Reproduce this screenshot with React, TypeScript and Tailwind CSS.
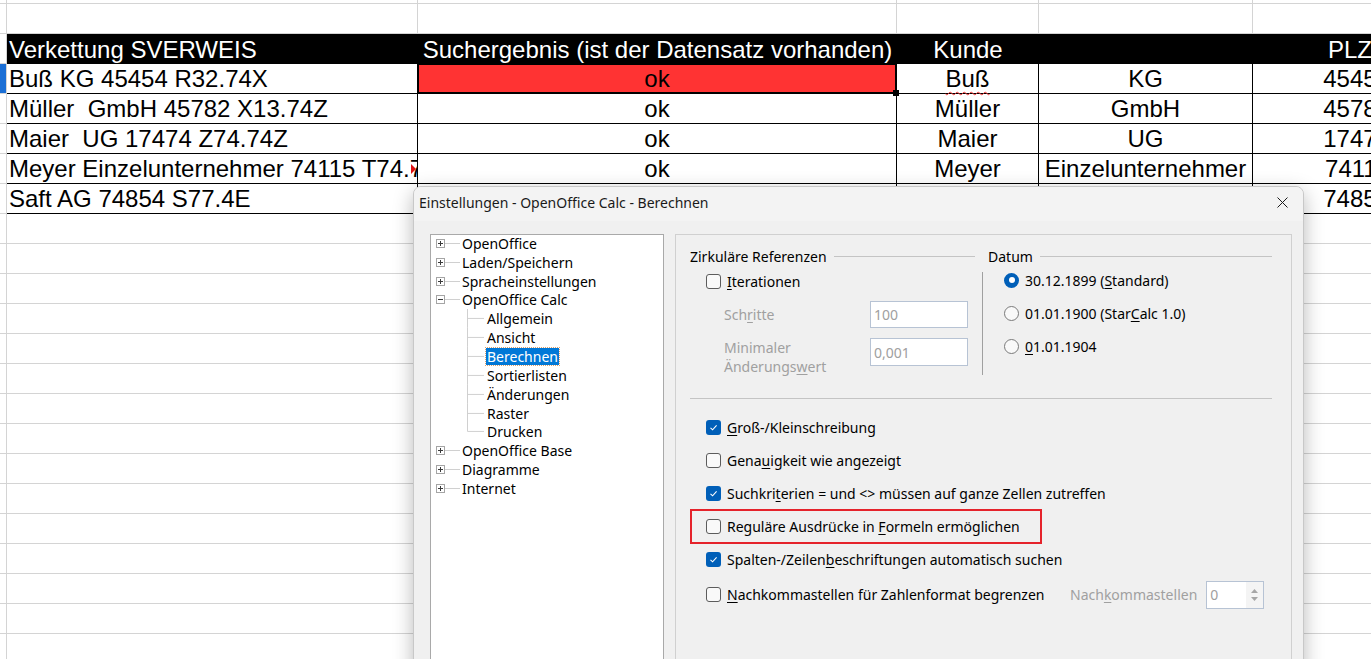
import React from 'react';

// Spreadsheet column widths (row header stub, A..E)
const colW = ['w-[7px]', 'w-[411px]', 'w-[479px]', 'w-[142px]', 'w-[214px]', 'w-[140px]'];

const rows = [
  { a: 'Buß KG 45454 R32.74X', c: 'Buß', d: 'KG', e: '45454' },
  { a: 'Müller  GmbH 45782 X13.74Z', c: 'Müller', d: 'GmbH', e: '45782' },
  { a: 'Maier  UG 17474 Z74.74Z', c: 'Maier', d: 'UG', e: '17474' },
  { a: 'Meyer Einzelunternehmer 74115 T74.74X', c: 'Meyer', d: 'Einzelunternehmer', e: '74115' },
  { a: 'Saft AG 74854 S77.4E', c: 'Saft', d: 'AG', e: '74854' },
];

function EmptyRow({ h }: { h: string }) {
  return (
    <div className={`flex ${h} shrink-0 border-b border-[#d4d4d4]`}>
      {colW.map((w, i) => (
        <div key={i} className={`${w} shrink-0 border-r border-[#d4d4d4]`} />
      ))}
    </div>
  );
}

function Sheet() {
  return (
    <div className="flex flex-col text-[24px] leading-none text-black">
      <EmptyRow h="h-[4px]" />
      <EmptyRow h="h-[30px]" />

      {/* header */}
      <div className="flex h-[30px] shrink-0">
        <div className="w-[7px] shrink-0 border-b border-r border-[#d4d4d4]" />
        <div className="flex flex-1 items-center bg-black pt-px text-white">
          <div className="w-[411px] shrink-0 pl-[2px]">Verkettung SVERWEIS</div>
          <div className="w-[479px] shrink-0 text-center">Suchergebnis (ist der Datensatz vorhanden)</div>
          <div className="w-[142px] shrink-0 text-center">Kunde</div>
          <div className="w-[214px] shrink-0" />
          <div className="w-[119px] shrink-0 text-right">PLZ</div>
        </div>
      </div>

      {/* data */}
      {rows.map((r, i) => (
        <div key={i} className="flex h-[30px] shrink-0">
          <div
            className={`w-[7px] shrink-0 border-b border-r border-[#d4d4d4] ${i === 0 ? 'bg-[#1b6fd6]' : ''}`}
          />
          <div className="relative flex w-[411px] shrink-0 items-center overflow-hidden whitespace-pre border-b border-r border-black pl-[2px] pt-px">
            {r.a}
            {i === 3 && (
              <span className="absolute right-[1px] top-[10px] h-0 w-0 border-y-[5px] border-l-[5px] border-y-transparent border-l-[#e01010]" />
            )}
          </div>
          <div
            className={`relative flex w-[479px] shrink-0 items-center justify-center border-b border-r border-black pt-px ${
              i === 0 ? 'bg-[#ff3333]' : ''
            }`}
          >
            {i < 4 ? 'ok' : ''}
            {i === 0 && (
              <>
                <span className="absolute -inset-[1px] border-2 border-black" />
                <span className="absolute -bottom-[3px] -right-[3px] h-[6px] w-[6px] bg-black" />
              </>
            )}
          </div>
          <div className="flex w-[142px] shrink-0 items-center justify-center border-b border-r border-black pt-px">
            {i === 0 ? (
              <span className="underline decoration-[#e33] decoration-wavy decoration-1 underline-offset-[4px]">
                {r.c}
              </span>
            ) : (
              r.c
            )}
          </div>
          <div className="flex w-[214px] shrink-0 items-center justify-center border-b border-r border-black pt-px">
            {r.d}
          </div>
          <div className="flex w-[140px] shrink-0 items-center justify-end border-b border-black pr-[3px] pt-px">
            {r.e}
          </div>
        </div>
      ))}

      {Array.from({ length: 15 }).map((_, i) => (
        <EmptyRow key={i} h="h-[30px]" />
      ))}
    </div>
  );
}

// ---- dialog widgets ----

function Check({ checked }: { checked?: boolean }) {
  if (checked) {
    return (
      <span className="flex h-[15px] w-[15px] shrink-0 items-center justify-center rounded-[3px] bg-[#005fb8]">
        <svg width="9" height="9" viewBox="0 0 9 9">
          <path d="M1.5 4.8 3.6 6.8 7.6 2.4" fill="none" stroke="#fff" strokeWidth="1.1" />
        </svg>
      </span>
    );
  }
  return <span className="h-[15px] w-[15px] shrink-0 rounded-[3px] border border-[#5c5c5c] bg-[#f9f9f9]" />;
}

function Radio({ checked }: { checked?: boolean }) {
  if (checked) {
    return (
      <span className="flex h-[15px] w-[15px] shrink-0 items-center justify-center rounded-full bg-[#005fb8]">
        <span className="h-[6px] w-[6px] rounded-full bg-white" />
      </span>
    );
  }
  return <span className="h-[15px] w-[15px] shrink-0 rounded-full border border-[#7a7a7a] bg-[#f9f9f9]" />;
}

function Field({ value, h = 'h-[27px]' }: { value: string; h?: string }) {
  return (
    <div
      className={`flex ${h} w-[98px] shrink-0 items-center border border-[#b7c3d4] bg-white pl-[3px] text-[#a0a0a0]`}
    >
      {value}
    </div>
  );
}

function PlusBox({ minus }: { minus?: boolean }) {
  return (
    <svg width="9" height="9" viewBox="0 0 9 9" className="shrink-0">
      <rect x="0.5" y="0.5" width="8" height="8" fill="#fff" stroke="#a5a5a5" />
      <path d="M2 4.5h5" stroke="#3a3a3a" />
      {!minus && <path d="M4.5 2v5" stroke="#3a3a3a" />}
    </svg>
  );
}

function TopItem({ label, minus }: { label: string; minus?: boolean }) {
  return (
    <div className="flex h-[18.85px] items-center pl-[5px]">
      <PlusBox minus={minus} />
      <span className="h-px w-[15px] shrink-0 bg-[#d0d0d0]" />
      <span className="ml-[2px]">{label}</span>
    </div>
  );
}

function ChildItem({ label, last, selected }: { label: string; last?: boolean; selected?: boolean }) {
  return (
    <div className="flex h-[18.85px] items-center pl-[36px]">
      <svg width="17" height="19" viewBox="0 0 17 19" preserveAspectRatio="none" className="h-full shrink-0">
        <path d={last ? 'M0.5 0V9.5H17' : 'M0.5 0V19M0.5 9.5H17'} stroke="#d0d0d0" fill="none" />
      </svg>
      <span
        className={
          selected
            ? 'ml-[2px] bg-[#0078d7] px-px leading-[17px] text-white outline-1 outline-dotted outline-[#d9a070]'
            : 'ml-[3px]'
        }
      >
        {label}
      </span>
    </div>
  );
}

function Tree() {
  return (
    <div className="h-[440px] w-[234px] shrink-0 border border-[#a9a9a9] bg-white text-[#000]">
      <div className="-mt-[1px]">
        <TopItem label="OpenOffice" />
        <TopItem label="Laden/Speichern" />
        <TopItem label="Spracheinstellungen" />
        <TopItem label="OpenOffice Calc" minus />
        <ChildItem label="Allgemein" />
        <ChildItem label="Ansicht" />
        <ChildItem label="Berechnen" selected />
        <ChildItem label="Sortierlisten" />
        <ChildItem label="Änderungen" />
        <ChildItem label="Raster" />
        <ChildItem label="Drucken" last />
        <TopItem label="OpenOffice Base" />
        <TopItem label="Diagramme" />
        <TopItem label="Internet" />
      </div>
    </div>
  );
}

const U = ({ children }: { children: React.ReactNode }) => (
  <span className="underline decoration-1 underline-offset-[2px]">{children}</span>
);

function CheckRow({ checked, children }: { checked?: boolean; children: React.ReactNode }) {
  return (
    <div className="flex h-[33px] items-center pl-[16px]">
      <Check checked={checked} />
      <span className="ml-[6px]">{children}</span>
    </div>
  );
}

function Panel() {
  return (
    <div className="h-[440px] w-[617px] shrink-0 border border-[#d0d0d0] pl-[14px] text-black">
      {/* top block */}
      <div className="flex h-[163px] pt-[12px]">
        <div className="w-[285px] shrink-0">
          <div className="flex h-[18px] items-center">
            <span>Zirkuläre Referenzen</span>
            <span className="ml-[7px] h-px flex-1 bg-[#c4c4c4]" />
          </div>
          <div className="mt-[8px] flex h-[16px] items-center pl-[16px]">
            <Check />
            <span className="ml-[6px]">
              <U>I</U>terationen
            </span>
          </div>
          <div className="mt-[12px] flex items-center">
            <span className="w-[180px] shrink-0 pl-[34px] text-[#a0a0a0]">
              Sch<U>r</U>itte
            </span>
            <Field value="100" />
          </div>
          <div className="mt-[10px] flex items-start">
            <span className="w-[180px] shrink-0 pl-[34px] leading-[19px] text-[#a0a0a0]">
              Minimaler
              <br />
              Änderungs<U>w</U>ert
            </span>
            <Field value="0,001" h="h-[28px]" />
          </div>
        </div>

        <div className="ml-[7px] w-[290px] shrink-0">
          <div className="flex h-[18px] items-center pl-[6px]">
            <span>Datum</span>
            <span className="ml-[7px] h-px flex-1 bg-[#c4c4c4]" />
          </div>
          <div className="mt-[7px] flex h-[103px] flex-col gap-[17px] border-l border-[#a0a0a0] pl-[21px]">
            <div className="flex h-[16px] items-center">
              <Radio checked />
              <span className="ml-[6px]">
                30.12.1899 (<U>S</U>tandard)
              </span>
            </div>
            <div className="flex h-[16px] items-center">
              <Radio />
              <span className="ml-[6px]">
                01.01.1900 (Star<U>C</U>alc 1.0)
              </span>
            </div>
            <div className="flex h-[16px] items-center">
              <Radio />
              <span className="ml-[6px]">
                <U>0</U>1.01.1904
              </span>
            </div>
          </div>
        </div>
      </div>

      <div className="h-px w-[582px] bg-[#c4c4c4]" />

      <div className="mt-[12px] flex flex-col">
        <CheckRow checked>
          <U>G</U>roß-/Kleinschreibung
        </CheckRow>
        <CheckRow>
          Gena<U>u</U>igkeit wie angezeigt
        </CheckRow>
        <CheckRow checked>
          Suchkri<U>t</U>erien = und &lt;&gt; müssen auf ganze Zellen zutreffen
        </CheckRow>
        <div className="-my-px flex h-[35px] w-[352px] items-center border-2 border-[#e5232b] pl-[14px]">
          <Check />
          <span className="ml-[6px]">
            Reguläre Ausdrücke in <U>F</U>ormeln ermöglichen
          </span>
        </div>
        <CheckRow checked>
          Spalten-/Zeilen<U>b</U>eschriftungen automatisch suchen
        </CheckRow>
        <div className="mt-[2px] flex h-[33px] items-center pl-[16px]">
          <div className="flex w-[364px] shrink-0 items-center">
            <Check />
            <span className="ml-[6px]">
              <U>N</U>achkommastellen für Zahlenformat begrenzen
            </span>
          </div>
          <span className="text-[#a0a0a0]">
            Nach<U>k</U>ommastellen
          </span>
          <div className="ml-[9px] flex h-[28px] w-[58px] items-stretch border border-[#b7c3d4] bg-white">
            <span className="flex flex-1 items-center pl-[3px] text-[#a0a0a0]">0</span>
            <span className="flex w-[17px] flex-col items-center justify-center gap-[4px] bg-[#f4f4f4]">
              <svg width="7" height="4" viewBox="0 0 7 4">
                <path d="M0 4 3.5 0 7 4Z" fill="#a6a6a6" />
              </svg>
              <svg width="7" height="4" viewBox="0 0 7 4">
                <path d="M0 0 3.5 4 7 0Z" fill="#a6a6a6" />
              </svg>
            </span>
          </div>
        </div>
      </div>
    </div>
  );
}

function Dialog() {
  return (
    <div className="absolute left-[413px] top-[186px] h-[520px] w-[891px] overflow-hidden rounded-t-[8px] border border-[#c8c8c8] bg-[#f0f0f0] font-['Noto_Sans','Open_Sans',sans-serif] text-[14px] shadow-[0_6px_20px_rgba(0,0,0,0.28)]">
      <div className="flex h-[34px] items-center justify-between bg-[#f3f3f3] pb-[3px] pl-[5px] pr-[15px]">
        <span className="text-[#1a1a1a]">Einstellungen - OpenOffice Calc - Berechnen</span>
        <svg width="11" height="11" viewBox="0 0 11 11">
          <path d="M0.5 0.5l10 10M10.5 0.5l-10 10" stroke="#1a1a1a" strokeWidth="1" />
        </svg>
      </div>
      <div className="flex gap-[11px] pl-[16px] pt-[13px]">
        <Tree />
        <Panel />
      </div>
    </div>
  );
}

export default function App() {
  return (
    <div className="relative h-[659px] w-[1371px] overflow-hidden bg-white font-['Liberation_Sans',Arial,sans-serif]">
      <Sheet />
      <Dialog />
    </div>
  );
}
